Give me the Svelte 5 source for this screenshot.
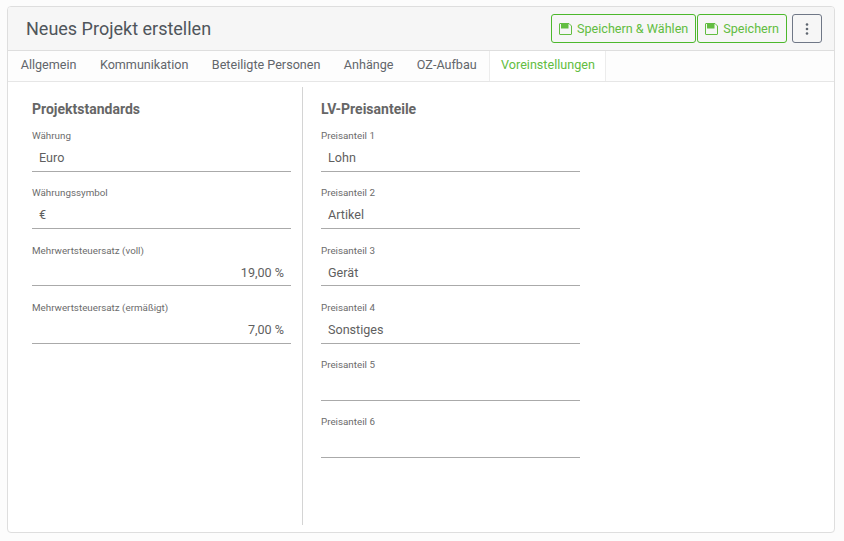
<script>
  const tabs = ['Allgemein', 'Kommunikation', 'Beteiligte Personen', 'Anhänge', 'OZ-Aufbau', 'Voreinstellungen'];
  const left = [
    { label: 'Währung', value: 'Euro' },
    { label: 'Währungssymbol', value: '€' },
    { label: 'Mehrwertsteuersatz (voll)', value: '19,00 %', right: true },
    { label: 'Mehrwertsteuersatz (ermäßigt)', value: '7,00 %', right: true }
  ];
  const right = [
    { label: 'Preisanteil 1', value: 'Lohn' },
    { label: 'Preisanteil 2', value: 'Artikel' },
    { label: 'Preisanteil 3', value: 'Gerät' },
    { label: 'Preisanteil 4', value: 'Sonstiges' },
    { label: 'Preisanteil 5', value: '' },
    { label: 'Preisanteil 6', value: '' }
  ];
</script>

{#snippet save()}
  <svg class="save" viewBox="0 0 13 12" width="13" height="12" aria-hidden="true">
    <path d="M1 .5h9l2.500 2.500v8a.5.500 0 0 1-.5.500H1a.5.500 0 0 1-.5-.5V1a.5.500 0 0 1 .5-.5z" fill="none" stroke="currentColor" />
    <path d="M2 1h7.500v4.500H2z" fill="currentColor" />
  </svg>
{/snippet}

{#snippet field(f)}
  <div class="field">
    <div class="label">{f.label}</div>
    <div class="value" class:right={f.right}>{f.value}</div>
  </div>
{/snippet}

<div class="page">
  <div class="card">
    <header>
      <h1>Neues Projekt erstellen</h1>
      <div class="actions">
        <button class="green">{@render save()}Speichern &amp; Wählen</button>
        <button class="green">{@render save()}Speichern</button>
        <button class="more" aria-label="Mehr">
          <svg viewBox="0 0 4 14" width="4" height="14"><circle cx="2" cy="2.500" r="1.300" /><circle cx="2" cy="7" r="1.300" /><circle cx="2" cy="11.500" r="1.300" /></svg>
        </button>
      </div>
    </header>
    <nav>
      {#each tabs as t, i}
        <div class="tab" class:active={i === 5}>{t}</div>
      {/each}
    </nav>
    <main>
      <section class="col first">
        <h2>Projektstandards</h2>
        {#each left as f}{@render field(f)}{/each}
      </section>
      <section class="col">
        <h2>LV-Preisanteile</h2>
        {#each right as f}{@render field(f)}{/each}
      </section>
    </main>
  </div>
</div>

<style>
  :global(body) { margin: 0; background: #fcfcfc; }
  .page {
    width: 844px; height: 541px; box-sizing: border-box;
    padding: 6px 9px 8px 7px;
    font-family: Roboto, sans-serif; color: #555;
  }
  .card {
    height: 100%; box-sizing: border-box;
    border: 1px solid #dedede; border-radius: 4px; background: #fff;
    display: flex; flex-direction: column; overflow: hidden;
  }
  header {
    height: 43px; flex: none;
    background: #f6f6f6; border-bottom: 1px solid #dedede;
    display: flex; align-items: center; justify-content: space-between;
    padding: 0 12px 0 18px;
  }
  h1 { margin: 0; font-size: 18px; font-weight: 400; color: #4f555b; }
  .actions { display: flex; gap: 1px; align-items: center; }
  button {
    font: inherit; height: 29px; box-sizing: border-box; background: transparent;
    border-radius: 3px; cursor: pointer; padding: 0;
    display: flex; align-items: center; justify-content: center;
  }
  .green {
    border: 1px solid #4cb82c; color: #62bd41; font-size: 12.600px;
    padding: 0 7px; gap: 5px;
  }
  .save { flex: none; }
  .more { width: 30px; margin-left: 4px; border: 1px solid #6f7786; }
  .more circle { fill: #5f6670; }
  nav {
    height: 30px; flex: none; display: flex; padding-left: 1px;
    background: #fdfdfd; border-bottom: 1px solid #e6e6e6;
    font-size: 12.600px;
  }
  .tab { padding: 0 10.700px; line-height: 28px; color: #62666b; border-right: 1px solid transparent; border-left: 1px solid transparent; }
  .tab.active { color: #62bd41; border-color: #ececec; background: #fff; margin-left: 1px; padding-right: 9.700px; }
  main { flex: 1; display: flex; padding: 5px 0 7px 24px; min-height: 0; }
  .col { width: 259px; }
  .col.first { padding-right: 11px; border-right: 1px solid #d4d4d4; margin-right: 18px; }
  h2 { margin: 0; padding-top: 14px; height: 24.850px; font-size: 14px; font-weight: 700; color: #666; line-height: 17px; box-sizing: content-box; }
  .field { height: 57.300px; box-sizing: border-box; padding-top: 4.100px; }
  .label { font-size: 9.800px; line-height: 12px; color: #6c6c6c; }
  .value {
    height: 27.900px; line-height: 28px; margin-top: 2px; padding: 0 7px; box-sizing: border-box;
    font-size: 12.600px; color: #5f5f5f; border-bottom: 1px solid #aaa;
  }
  .value.right { text-align: right; }
</style>
